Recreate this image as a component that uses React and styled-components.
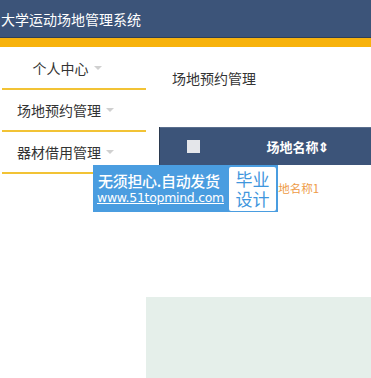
import styled, { createGlobalStyle } from "styled-components";

const GlobalStyle = createGlobalStyle`
  html, body {
    margin: 0;
    padding: 0;
    background: #fff;
    font-family: "Microsoft YaHei", "Noto Sans CJK SC", sans-serif;
  }
`;

const menu = [
  { label: "个人中心", center: true },
  { label: "场地预约管理" },
  { label: "器材借用管理" },
];

const Page = styled.div`
  width: 371px;
  height: 378px;
  overflow: hidden;
  position: relative;
`;

const Header = styled.div`
  height: 37px;
  background: #3c5479;
  border-bottom: 1px solid #2f3f55;
  display: flex;
  align-items: center;
  padding-left: 1px;
  color: #fff;
  font-size: 14px;
`;

const GoldBar = styled.div`
  height: 9px;
  background: #f7b20c;
`;

const Body = styled.div`
  display: flex;
  height: 331px;
`;

const Sidebar = styled.div`
  width: 146px;
  padding-top: 1px;
`;

const MenuItem = styled.div`
  height: 40px;
  margin-left: 2px;
  border-bottom: 2px solid #f2c335;
  display: flex;
  align-items: center;
  justify-content: ${(p) => (p.$center ? "center" : "flex-start")};
  padding-left: ${(p) => (p.$center ? "0" : "15px")};
  padding-right: ${(p) => (p.$center ? "14px" : "0")};
  font-size: 14px;
  color: #333;
`;

const Caret = styled.span`
  display: inline-block;
  margin-left: 5px;
  width: 0;
  height: 0;
  border-left: 4px solid transparent;
  border-right: 4px solid transparent;
  border-top: 4px solid #d0d0d0;
`;

const Main = styled.div`
  flex: 1;
  display: flex;
  flex-direction: column;
`;

const Title = styled.div`
  padding: 21px 0 0 26px;
  height: 28px;
  font-size: 14px;
  color: #333;
`;

const Table = styled.div`
  margin: 31px 0 0 13px;
  border-left: 1px solid #2b3a50;
`;

const HeadRow = styled.div`
  height: 37px;
  background: #3c5479;
  display: flex;
  align-items: center;
  border-top: 1px solid #5a6e8e;
`;

const CheckCell = styled.div`
  width: 66px;
  display: flex;
  justify-content: center;
`;

const Check = styled.div`
  width: 13px;
  height: 13px;
  background: #e4e6ea;
`;

const HeadCell = styled.div`
  width: 144px;
  text-align: center;
  color: #fff;
  font-size: 13px;
  font-weight: bold;
`;

const DataRow = styled.div`
  height: 46px;
  display: flex;
  align-items: center;
`;

const DataCell = styled.div`
  width: 134px;
  margin-left: 66px;
  text-align: center;
  color: #ee9a45;
  font-size: 11.5px;
`;

const Panel = styled.div`
  margin-top: auto;
  height: 81px;
  background: #e5efea;
`;

const Ad = styled.div`
  position: absolute;
  left: 93px;
  top: 165px;
  width: 185px;
  height: 47px;
  background: #4a9de0;
  display: flex;
  align-items: center;
  box-sizing: border-box;
  padding: 1px 2px 1px 3px;
`;

const AdText = styled.div`
  flex: 1;
  display: flex;
  flex-direction: column;
  color: #fff;
  line-height: 1;
`;

const AdLine = styled.span`
  font-size: 15px;
  font-weight: 500;
  margin-bottom: 4px;
  padding-left: 2px;
  letter-spacing: -0.3px;
`;

const AdLink = styled.span`
  font-family: "DejaVu Sans", sans-serif;
  font-size: 12.5px;
  text-decoration: underline;
  letter-spacing: -0.3px;
  padding-left: 1px;
`;

const AdBadge = styled.div`
  width: 47px;
  height: 44px;
  background: #fff;
  border-radius: 2px;
  color: #3f96dd;
  font-size: 17px;
  line-height: 20px;
  text-align: center;
  display: flex;
  flex-direction: column;
  justify-content: center;
`;

export default function App() {
  return (
    <Page>
      <GlobalStyle />
      <Header>大学运动场地管理系统</Header>
      <GoldBar />
      <Body>
        <Sidebar>
          {menu.map((m) => (
            <MenuItem key={m.label} $center={m.center}>
              {m.label}
              <Caret />
            </MenuItem>
          ))}
        </Sidebar>
        <Main>
          <Title>场地预约管理</Title>
          <Table>
            <HeadRow>
              <CheckCell>
                <Check />
              </CheckCell>
              <HeadCell>场地名称⇕</HeadCell>
            </HeadRow>
            <DataRow>
              <DataCell>场地名称1</DataCell>
            </DataRow>
          </Table>
          <Panel />
        </Main>
      </Body>
      <Ad>
        <AdText>
          <AdLine>无须担心.自动发货</AdLine>
          <AdLink>www.51topmind.com</AdLink>
        </AdText>
        <AdBadge>
          <span>毕业</span>
          <span>设计</span>
        </AdBadge>
      </Ad>
    </Page>
  );
}
